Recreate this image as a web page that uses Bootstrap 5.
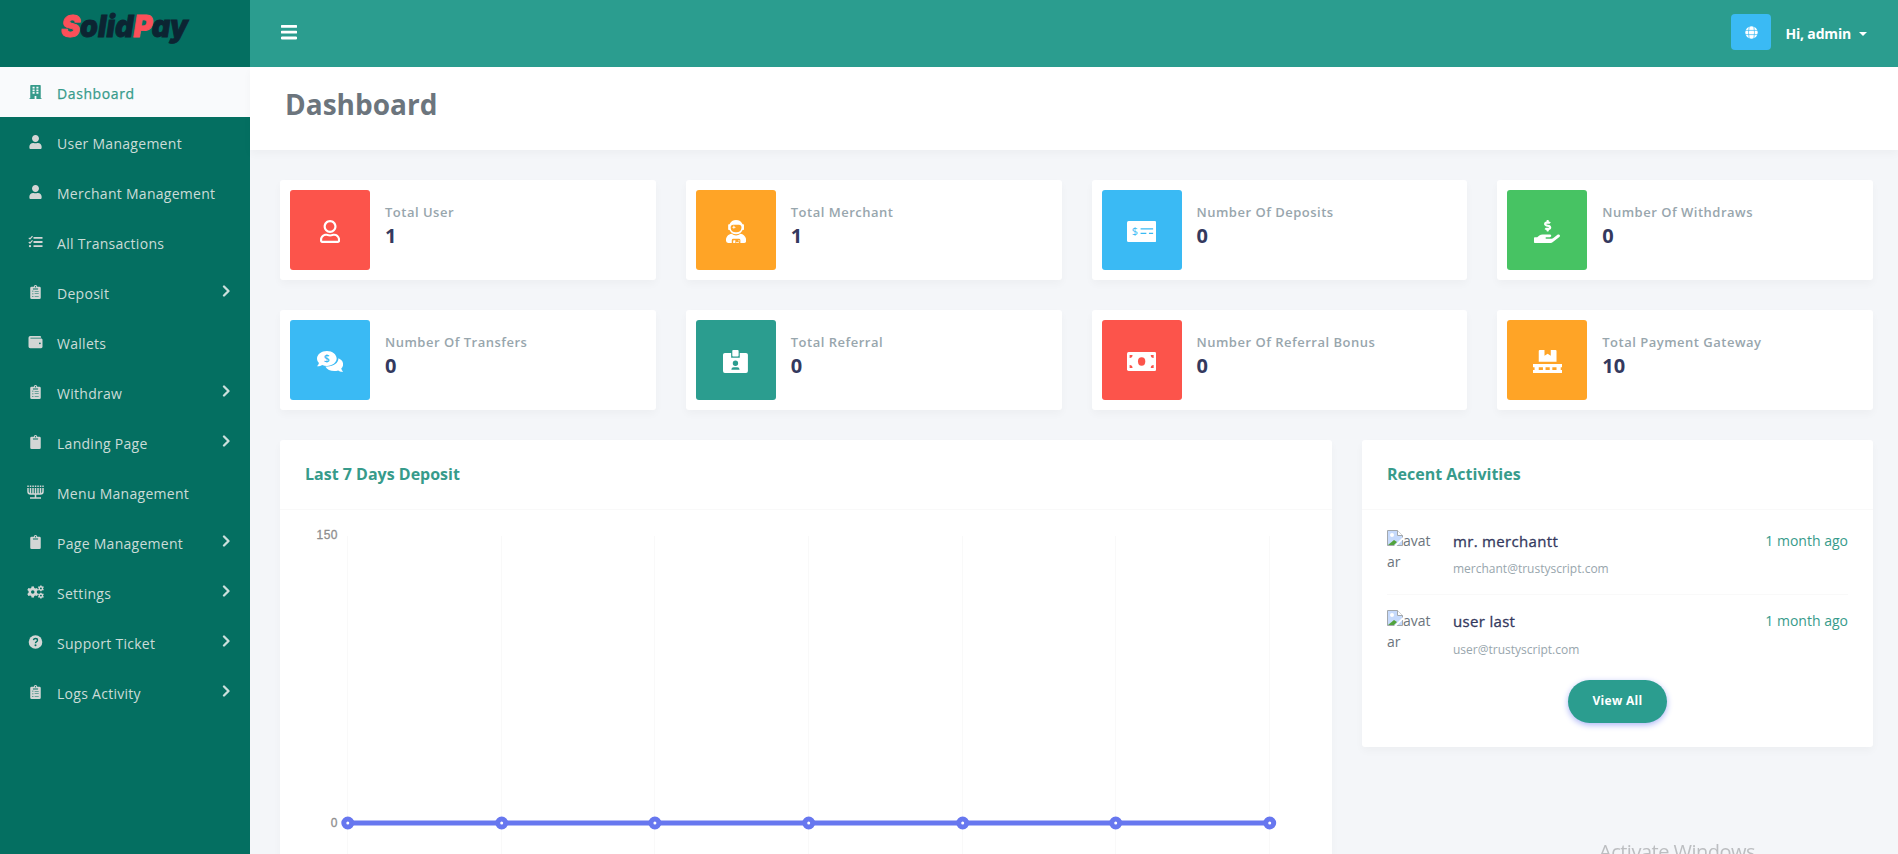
<!DOCTYPE html>
<html lang="en">
<head>
<meta charset="utf-8">
<title>Dashboard - SolidPay</title>
<link href="https://cdn.jsdelivr.net/npm/bootstrap@5.3.0/dist/css/bootstrap.min.css" rel="stylesheet">
<style>
body{font-family:"Open Sans","Noto Sans",sans-serif;font-size:14px;line-height:24px;color:#6c757d;background:#f4f6f9;height:854px;overflow:hidden}
.side{width:250px;height:854px;background:#046f61;flex:none}
.brand{height:67px}
.side .nav-link{height:50px;padding:0 0 0 22px;color:#cbdcd8;letter-spacing:.28px;display:flex;align-items:center;font-size:14px}
.side .nav-link span{padding-top:3px}
.side .nav-link svg{margin:-1px 13px 0 5px;width:17px;height:14px;fill:#d3d6d5;flex:none}
.side .nav-link .chev{margin:-2px 19px 0 auto;width:9px;height:12px;fill:none;stroke:#cbe0dc;stroke-width:2.3}
.side .nav-link.active{background:#f9fafc;color:#379b8b;letter-spacing:.6px;-webkit-text-stroke:.25px #379b8b}
.side .nav-link.active svg{fill:#379b8b}
.topbar{height:67px;background:#2b9d8f;padding:0 31px 0 31px}
.burger{margin-top:-3px}
.globe{width:40px;height:36px;background:#3abaf4;border-radius:4px;margin-top:-3px}
.hi{font-weight:700;letter-spacing:-.18px;color:#fff;margin:0 8px 0 14px}
.caret{border:4px solid transparent;border-top-color:#fff;border-bottom:0}
.pagehead{height:83px;background:#fff;padding:18px 35px;box-shadow:0 4px 8px rgba(0,0,0,.03);position:relative}
.pagehead h1{font-size:28px;font-weight:700;line-height:38px;margin:0}
.main{padding:30px 25px 0 30px}
.main .row{--bs-gutter-x:30px;--bs-gutter-y:30px}
.box{background:#fff;border-radius:3px;box-shadow:0 4px 8px rgba(0,0,0,.03)}
.stat{height:100px;padding:10px}
.tile{width:80px;height:80px;border-radius:3px;flex:none;margin-right:15px}
.tile svg{fill:#fff;height:23px;margin-top:3px}
.lab{font-size:13px;font-weight:600;letter-spacing:.5px;color:#98a6ad;line-height:16px;margin-top:14px}
.val{font-size:20px;font-weight:700;color:#34395e;line-height:26px;margin-top:3px}
.red{background:#fc544b}.org{background:#ffa426}.blu{background:#3abaf4}.grn{background:#47c363}.tea{background:#2b9d8f}
.boxhead{height:70px;border-bottom:1px solid #f9f9f9;padding:20px 25px;color:#379b8b;font-size:16px;font-weight:700;line-height:28px}
.recent{height:307px}
.acts{padding:20px 25px 0}
.act{height:80px;display:flex}
.act.last{height:70px}
.rule{border-top:1px solid #f9f9f9;margin-top:-16px;height:16px}
.ava{width:50px;margin-right:16px;line-height:21px;color:#6c757d}
.nm{font-size:15px;color:#34395e;line-height:24px;margin-top:-1px;letter-spacing:.32px;-webkit-text-stroke:.3px #34395e}
.em{font-size:12px;color:#98a6ad;line-height:20px;margin-top:6px}
.act.last .em{margin-top:7px}
.tm{color:#379b8b;line-height:22px}
.va{width:99px;height:43px;border-radius:30px;background:#2b9d8f;color:#fff;font-weight:700;font-size:12px;letter-spacing:.3px;box-shadow:0 2px 6px #acb5f6;display:flex;align-items:center;justify-content:center;padding-bottom:2px}
.wm{position:fixed;left:1599px;top:838px;font-size:20px;letter-spacing:-.5px;line-height:28px;color:#bcbec1;white-space:nowrap}
</style>
</head>
<body>
<svg width="0" height="0" class="d-none">
<symbol id="user" viewBox="0 0 448 512"><path d="M224 256c70.700 0 128-57.300 128-128S294.700 0 224 0 96 57.300 96 128s57.300 128 128 128zm89.600 32h-16.700c-22.200 10.200-46.900 16-72.900 16s-50.600-5.800-72.900-16h-16.700C60.200 288 0 348.200 0 422.400V464c0 26.500 21.500 48 48 48h352c26.500 0 48-21.500 48-48v-41.600c0-74.200-60.200-134.400-134.400-134.400z"/></symbol>
<symbol id="clip" viewBox="0 0 384 512"><path fill-rule="evenodd" d="M336 64h-80a64 64 0 0 0-128 0H48a48 48 0 0 0-48 48v352a48 48 0 0 0 48 48h288a48 48 0 0 0 48-48V112a48 48 0 0 0-48-48zM192 40a24 24 0 1 1 0 48 24 24 0 0 1 0-48zM96 128h192v22a10 10 0 0 1-10 10H106a10 10 0 0 1-10-10z"/></symbol>
<symbol id="cliplist" viewBox="0 0 384 512"><path fill-rule="evenodd" d="M336 64h-80a64 64 0 0 0-128 0H48a48 48 0 0 0-48 48v352a48 48 0 0 0 48 48h288a48 48 0 0 0 48-48V112a48 48 0 0 0-48-48zM192 40a24 24 0 1 1 0 48 24 24 0 0 1 0-48zM96 128h192v22a10 10 0 0 1-10 10H106a10 10 0 0 1-10-10zM72 214h42v28H72zM160 218h150v18H160zM72 310h42v28H72zM160 314h150v18H160zM72 404h42v28H72zM160 408h150v18H160z"/></symbol>
<symbol id="chev" viewBox="0 0 9 12"><path d="M2 1.500l4.500 4.500L2 10.500" stroke-linecap="round" stroke-linejoin="round"/></symbol>
<symbol id="gear" viewBox="0 0 24 24"><path fill-rule="evenodd" d="M9.500 0h5l.6 3.500 2.400 1.300 3.400-1.200 2.500 4.200-2.700 2.300v3.800l2.700 2.300-2.500 4.200-3.400-1.200-2.400 1.300L14.500 24h-5l-.6-3.500-2.400-1.300-3.400 1.200-2.500-4.200 2.700-2.300v-3.800L.6 7.800l2.500-4.200 3.400 1.200 2.400-1.300zM12 8.300a3.700 3.700 0 1 0 0 7.400 3.700 3.700 0 0 0 0-7.400z"/></symbol>
</svg>
<div class="d-flex">
<aside class="side">
 <div class="brand"><svg width="250" height="60"><text x="61" y="36.500" font-family="Inter" font-weight="900" font-style="italic" font-size="30" textLength="127" lengthAdjust="spacingAndGlyphs" fill="#0c2432" stroke="#0c2432" stroke-width=".8"><tspan fill="#fc4f59" stroke="#fc4f59">S</tspan>olid<tspan fill="#fc4f59" stroke="#fc4f59">P</tspan>ay</text></svg></div>
 <nav class="nav flex-column flex-nowrap">
 <a class="nav-link active"><svg viewBox="0 0 448 512"><path fill-rule="evenodd" d="M436 480h-20V24a24 24 0 0 0-24-24H56a24 24 0 0 0-24 24v456H12a12 12 0 0 0-12 12v20h192V400h64v112h192v-20a12 12 0 0 0-12-12zM116 64h76v64h-76zM256 64h76v64h-76zM116 160h76v64h-76zM256 160h76v64h-76zM116 256h76v64h-76zM256 256h76v64h-76z"/></svg><span>Dashboard</span></a>
 <a class="nav-link"><svg><use href="#user"/></svg><span>User Management</span></a>
 <a class="nav-link"><svg><use href="#user"/></svg><span>Merchant Management</span></a>
 <a class="nav-link"><svg viewBox="0 0 14 14"><path d="M5 2h9v1.800H5zM5 6.100h9v1.800H5zM5 10.200h9V12H5z"/><circle cx="1.500" cy="11.100" r="1.200"/><path d="M.3 2.800l1.200 1.200L4 1.200M.3 7l1.200 1.200L4 5.400" fill="none" stroke="#d3d6d5" stroke-width="1.200"/></svg><span>All Transactions</span></a>
 <a class="nav-link"><svg><use href="#cliplist"/></svg><span>Deposit</span><svg class="chev"><use href="#chev"/></svg></a>
 <a class="nav-link"><svg viewBox="0 0 512 512"><path d="M461 128H80a16 16 0 0 1 0-32h368a16 16 0 0 0 16-16c0-26-22-48-48-48H64A64 64 0 0 0 0 96v320a64 64 0 0 0 64 64h397c28 0 51-22 51-48V176c0-26-23-48-51-48zm-45 208a32 32 0 1 1 0-64 32 32 0 0 1 0 64z"/></svg><span>Wallets</span></a>
 <a class="nav-link"><svg><use href="#cliplist"/></svg><span>Withdraw</span><svg class="chev"><use href="#chev"/></svg></a>
 <a class="nav-link"><svg><use href="#clip"/></svg><span>Landing Page</span><svg class="chev"><use href="#chev"/></svg></a>
 <a class="nav-link"><svg viewBox="0 0 17 14"><g fill="none" stroke="#d3d6d5" stroke-width="1.500"><path d="M1 3v3.500q0 2.500 2.500 2.500h10q2.500 0 2.500-2.500V3M3.500 3v5.500M6 3v5.500M8.500 3v10M11 3v5.500M13.500 3v5.500M3 12.900h11"/><path d="M.3 1.200h16.400" stroke-dasharray="1.500 1"/></g></svg><span>Menu Management</span></a>
 <a class="nav-link"><svg><use href="#clip"/></svg><span>Page Management</span><svg class="chev"><use href="#chev"/></svg></a>
 <a class="nav-link"><svg viewBox="0 0 17 14"><use href="#gear" x="0" y="1.200" width="11.500" height="11.500"/><use href="#gear" x="10.800" y=".3" width="6.200" height="6.200"/><use href="#gear" x="10.800" y="7.500" width="6.200" height="6.200"/></svg><span>Settings</span><svg class="chev"><use href="#chev"/></svg></a>
 <a class="nav-link"><svg viewBox="0 0 14 14"><circle cx="7" cy="7" r="6.800"/><path d="M4.900 5.200Q5.300 3.500 7 3.500q2 0 2 1.700 0 1-1.200 1.600-.8.400-.8 1.400" fill="none" stroke="#046f61" stroke-width="1.400"/><circle cx="7" cy="10.200" r="1" fill="#046f61"/></svg><span>Support Ticket</span><svg class="chev"><use href="#chev"/></svg></a>
 <a class="nav-link"><svg><use href="#cliplist"/></svg><span>Logs Activity</span><svg class="chev"><use href="#chev"/></svg></a>
 </nav>
</aside>
<div class="flex-grow-1">
 <header class="topbar d-flex align-items-center">
  <svg width="16" height="16" viewBox="0 0 16 16" class="me-auto burger"><path d="M1 2.300h14M1 8.200h14M1 14h14" stroke="#fff" stroke-width="2.800" stroke-linecap="round"/></svg>
  <div class="globe d-flex align-items-center justify-content-center"><svg width="13" height="13" viewBox="0 0 13 13"><circle cx="6.500" cy="6.500" r="6.200" fill="#fff"/><path d="M0 4.400h13M0 8.600h13M4.200 0q-1.400 6.500 0 13M8.800 0q1.400 6.500 0 13" fill="none" stroke="#3abaf4" stroke-width=".7"/></svg></div>
  <span class="hi">Hi, admin</span><span class="caret"></span>
 </header>
 <div class="pagehead"><h1>Dashboard</h1></div>
 <main class="main">
 <div class="row">
  <div class="col-3"><div class="box stat d-flex"><div class="tile red d-flex align-items-center justify-content-center"><svg viewBox="0 0 448 512"><path d="M313.600 304c-28.700 0-42.500 16-89.600 16-47.100 0-60.800-16-89.600-16C60.200 304 0 364.200 0 438.400V464c0 26.500 21.500 48 48 48h352c26.500 0 48-21.500 48-48v-25.600c0-74.200-60.200-134.400-134.400-134.400zM400 464H48v-25.600c0-47.600 38.800-86.400 86.400-86.400 14.600 0 38.300 16 89.600 16 51.700 0 74.900-16 89.600-16 47.600 0 86.400 38.800 86.400 86.400V464zM224 288c79.500 0 144-64.500 144-144S303.500 0 224 0 80 64.500 80 144s64.500 144 144 144zm0-240c52.900 0 96 43.100 96 96s-43.100 96-96 96-96-43.100-96-96 43.100-96 96-96z"/></svg></div><div><div class="lab">Total User</div><div class="val">1</div></div></div></div>
  <div class="col-3"><div class="box stat d-flex"><div class="tile org d-flex align-items-center justify-content-center"><svg viewBox="0 0 448 512"><path fill-rule="evenodd" d="M64 224h14a160 160 0 0 0 292 0h14a16 16 0 0 0 16-16v-96a16 16 0 0 0-16-16h-14a160 160 0 0 0-292 0H64a16 16 0 0 0-16 16v96a16 16 0 0 0 16 16zm40-64a56 56 0 0 1 56-56h128a56 56 0 0 1 56 56v16a112 112 0 0 1-112 96h-16a112 112 0 0 1-112-96zM176 208l12-36 36-12-36-12-12-36-12 36-36 12 36 12zM324 308a175 175 0 0 1-200 0C54 318 0 376 0 448v16a48 48 0 0 0 48 48h80v-64a32 32 0 0 1 32-32h128a32 32 0 0 1 32 32v64h80a48 48 0 0 0 48-48v-16c0-72-54-130-124-140zM176 448h32v64h-48v-48a16 16 0 0 1 16-16zm112 0a16 16 0 1 0 0 32 16 16 0 0 0 0-32zm-64 64h64v-16h-64z"/></svg></div><div><div class="lab">Total Merchant</div><div class="val">1</div></div></div></div>
  <div class="col-3"><div class="box stat d-flex"><div class="tile blu d-flex align-items-center justify-content-center"><svg viewBox="0 0 28 22"><rect y="1" width="28" height="20" rx="1.500"/><path d="M13 8.500h12M13 12.800h5.500M21 12.800h4" stroke="#3abaf4" stroke-width="1"/><text x="4.600" y="14.500" font-size="10.500" font-family="Open Sans" fill="#3abaf4">$</text></svg></div><div><div class="lab">Number Of Deposits</div><div class="val">0</div></div></div></div>
  <div class="col-3"><div class="box stat d-flex"><div class="tile grn d-flex align-items-center justify-content-center"><svg viewBox="0 0 576 512"><path d="M271.060,144.300l54.270,14.300a8.590,8.590,0,0,1,6.630,8.100c0,4.600-4.090,8.400-9.120,8.400h-35.600a30,30,0,0,1-11.190-2.200c-5.240-2.200-11.280-1.700-15.300,2l-19,17.500a11.680,11.680,0,0,0-2.250,2.660,11.420,11.420,0,0,0,3.880,15.740,83.770,83.770,0,0,0,34.510,11.500V240c0,8.800,7.830,16,17.370,16h17.370c9.550,0,17.380-7.200,17.380-16V222.400c32.930-3.600,57.840-31,53.500-63-3.150-23-22.460-41.300-46.560-47.700L282.680,97.400a8.590,8.590,0,0,1-6.630-8.100c0-4.600,4.090-8.400,9.120-8.400h35.600A30,30,0,0,1,332,83.100c5.230,2.200,11.280,1.700,15.300-2l19-17.500A11.310,11.310,0,0,0,368.470,61a11.430,11.430,0,0,0-3.840-15.780,83.820,83.820,0,0,0-34.520-11.500V16c0-8.800-7.820-16-17.370-16H295.370C285.820,0,278,7.200,278,16V33.600c-32.890,3.600-57.850,31-53.510,63C227.630,119.600,247,137.900,271.060,144.300ZM565.270,328.100c-11.800-10.700-30.200-10-42.600,0L430.270,402a63.640,63.640,0,0,1-40,14H272a16,16,0,0,1,0-32h78.290c15.900,0,30.710-10.900,33.250-26.600a31.200,31.200,0,0,0,.46-5.460A32,32,0,0,0,352,320H192a117.660,117.660,0,0,0-74.100,26.290L71.400,384H16A16,16,0,0,0,0,400v96a16,16,0,0,0,16,16H372.770a64,64,0,0,0,40-14L564,377a32,32,0,0,0,1.280-48.900Z"/></svg></div><div><div class="lab">Number Of Withdraws</div><div class="val">0</div></div></div></div>
  <div class="col-3"><div class="box stat d-flex"><div class="tile blu d-flex align-items-center justify-content-center"><svg viewBox="0 0 25 22"><path d="M20.500 8c2.900 1.200 4.500 3.300 4.500 5.700 0 1.600-.7 3-1.800 4.100.3 1.200 1 2.200 1.800 3-2 .2-3.500-.3-4.700-1.200-5 1.500-10.300-.1-12.300-3.900C15 16.500 20.500 13 20.500 8z"/><path d="M9.500 1C4.300 1 0 4.300 0 8.200c0 1.700.7 3.200 1.900 4.300-.3 1.200-1 2.200-1.900 3 2 .1 3.700-.3 5-1.200 1.400.6 2.900.9 4.500.9 5.200 0 9.300-3.100 9.300-7S14.700 1 9.500 1z"/><text x="6.400" y="11.700" font-size="10" font-family="Open Sans" fill="#3abaf4" font-weight="600">$</text></svg></div><div><div class="lab">Number Of Transfers</div><div class="val">0</div></div></div></div>
  <div class="col-3"><div class="box stat d-flex"><div class="tile tea d-flex align-items-center justify-content-center"><svg viewBox="0 0 26 24"><path fill-rule="evenodd" d="M2 3h6.500v5h9V3H24a2 2 0 0 1 2 2v17a2 2 0 0 1-2 2H2a2 2 0 0 1-2-2V5a2 2 0 0 1 2-2zM13 11a2.800 2.800 0 1 0 0 5.600 2.800 2.800 0 0 0 0-5.600zM8.700 20.500h8.600q0-2.500-2.500-2.500h-3.600q-2.500 0-2.500 2.500z"/><rect x="9.700" width="6.600" height="6.800" rx="1"/></svg></div><div><div class="lab">Total Referral</div><div class="val">0</div></div></div></div>
  <div class="col-3"><div class="box stat d-flex"><div class="tile red d-flex align-items-center justify-content-center"><svg viewBox="0 0 28 22"><rect y="2" width="28" height="18" rx="1.500"/><g fill="#fc544b"><ellipse cx="14" cy="11" rx="3.500" ry="4"/><path d="M2.500 4.800h2.800a2.800 2.800 0 0 1-2.800 2.800zM25.500 4.800h-2.800a2.800 2.800 0 0 0 2.800 2.800zM2.500 17.200h2.800a2.800 2.800 0 0 0-2.800-2.800zM25.500 17.200h-2.800a2.800 2.800 0 0 1 2.800-2.800z"/></g></svg></div><div><div class="lab">Number Of Referral Bonus</div><div class="val">0</div></div></div></div>
  <div class="col-3"><div class="box stat d-flex"><div class="tile org d-flex align-items-center justify-content-center"><svg viewBox="0 0 28 22"><path fill-rule="evenodd" d="M6.500 0H11v5.500l3-1.800 3 1.800V0h4.500a1 1 0 0 1 1 1v10.300h-17V1a1 1 0 0 1 1-1zM0 13.500h28v3h-1.500v2.700H28V22H0v-2.800h1.500v-2.700H0zM5.500 16.500v2.700h4v-2.700zM12 16.500v2.700h4v-2.700zM18.500 16.500v2.700h4v-2.700z"/></svg></div><div><div class="lab">Total Payment Gateway</div><div class="val">10</div></div></div></div>
  <div class="col-8"><div class="box"><div class="boxhead">Last 7 Days Deposit</div>
   <svg width="1052" height="420" class="d-block" font-family="Liberation Sans" font-size="12" fill="#8e8e8e">
    <path d="M67.500 26V420M221.500 26V420M374.500 26V420M528.500 26V420M682.500 26V420M835.500 26V420M989.500 26V420" stroke="#f9f9f9"/>
    <g stroke="#8e8e8e" stroke-width=".3"><text x="57.500" y="29" text-anchor="end" textLength="21">150</text><text x="57.500" y="317" text-anchor="end">0</text></g>
    <path d="M67.800 313H989.500" stroke="#6777ef" stroke-width="5"/>
    <g fill="#fff" stroke="#6777ef" stroke-width="5"><circle cx="67.800" cy="313" r="4"/><circle cx="221.700" cy="313" r="4"/><circle cx="374.900" cy="313" r="4"/><circle cx="528.700" cy="313" r="4"/><circle cx="682.700" cy="313" r="4"/><circle cx="835.700" cy="313" r="4"/><circle cx="989.700" cy="313" r="4"/></g>
   </svg></div></div>
  <div class="col-4"><div class="box recent"><div class="boxhead">Recent Activities</div>
   <div class="acts">
    <div class="act"><div class="ava"><svg width="16" height="16" viewBox="0 0 16 16" class="align-top"><path d="M.5 .5h10l5 5v10H.5z" fill="#c6dafc" stroke="#a3a8ad"/><path d="M10.500 .5v5h5" fill="#fff" stroke="#a3a8ad"/><circle cx="5" cy="5" r="2" fill="#fff"/><path d="M1 15l6-5 3 2-3 3z" fill="#51a33c"/><path d="M16 7L7 16h2.500L16 9.500z" fill="#fff"/></svg>avat<br>ar</div><div><div class="nm">mr. merchantt</div><div class="em">merchant@trustyscript.com</div></div><div class="tm ms-auto">1 month ago</div></div>
    <div class="rule"></div>
    <div class="act last"><div class="ava"><svg width="16" height="16" viewBox="0 0 16 16" class="align-top"><path d="M.5 .5h10l5 5v10H.5z" fill="#c6dafc" stroke="#a3a8ad"/><path d="M10.500 .5v5h5" fill="#fff" stroke="#a3a8ad"/><circle cx="5" cy="5" r="2" fill="#fff"/><path d="M1 15l6-5 3 2-3 3z" fill="#51a33c"/><path d="M16 7L7 16h2.500L16 9.500z" fill="#fff"/></svg>avat<br>ar</div><div><div class="nm">user last</div><div class="em">user@trustyscript.com</div></div><div class="tm ms-auto">1 month ago</div></div>
    <div class="va mx-auto">View All</div>
   </div></div></div>
 </div>
 </main>
</div>
</div>
<div class="wm">Activate Windows</div>
<script src="https://cdn.jsdelivr.net/npm/bootstrap@5.3.0/dist/js/bootstrap.bundle.min.js"></script>
</body>
</html>
